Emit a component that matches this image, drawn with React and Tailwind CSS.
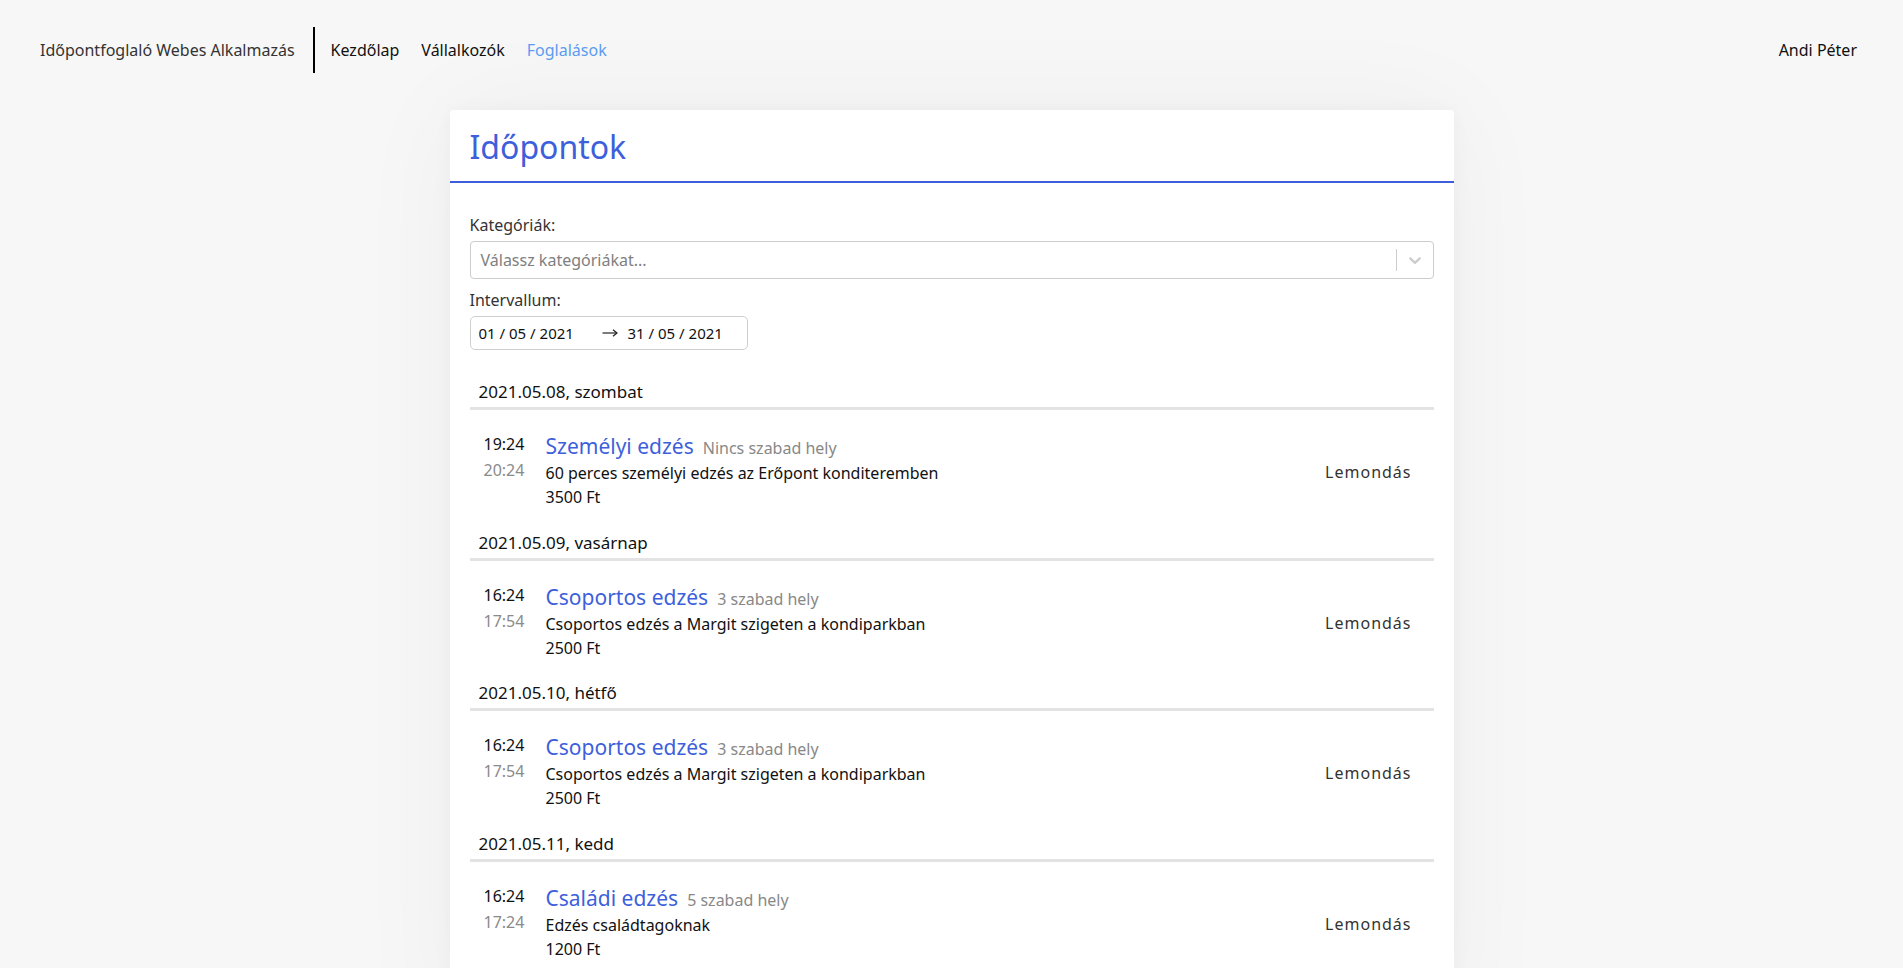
import React from "react";

const days = [
  {
    date: "2021.05.08, szombat",
    start: "19:24",
    end: "20:24",
    title: "Személyi edzés",
    free: "Nincs szabad hely",
    desc: "60 perces személyi edzés az Erőpont konditeremben",
    price: "3500 Ft",
  },
  {
    date: "2021.05.09, vasárnap",
    start: "16:24",
    end: "17:54",
    title: "Csoportos edzés",
    free: "3 szabad hely",
    desc: "Csoportos edzés a Margit szigeten a kondiparkban",
    price: "2500 Ft",
  },
  {
    date: "2021.05.10, hétfő",
    start: "16:24",
    end: "17:54",
    title: "Csoportos edzés",
    free: "3 szabad hely",
    desc: "Csoportos edzés a Margit szigeten a kondiparkban",
    price: "2500 Ft",
  },
  {
    date: "2021.05.11, kedd",
    start: "16:24",
    end: "17:24",
    title: "Családi edzés",
    free: "5 szabad hely",
    desc: "Edzés családtagoknak",
    price: "1200 Ft",
  },
];

function Chevron() {
  return (
    <svg viewBox="0 0 20 20" width="20" height="20" fill="#cccccc">
      <path d="M4.516 7.548c0.436-0.446 1.043-0.481 1.576 0l3.908 3.747 3.908-3.747c0.533-0.481 1.141-0.446 1.574 0 0.436 0.445 0.408 1.197 0 1.615-0.406 0.418-4.695 4.502-4.695 4.502-0.217 0.223-0.502 0.335-0.787 0.335s-0.57-0.112-0.789-0.335c0 0-4.287-4.084-4.695-4.502s-0.436-1.17 0-1.615z" />
    </svg>
  );
}

function Arrow() {
  return (
    <svg viewBox="0 0 16 10" width="16" height="10" fill="none" stroke="#222" strokeWidth="1.2">
      <path d="M0.5 5H15" />
      <path d="M11 1.8L15 5L11 8.2" />
    </svg>
  );
}

export default function App() {
  return (
    <div className="h-screen overflow-hidden bg-[#f7f7f7] font-['Noto_Sans',sans-serif] text-[#111]">
      <nav className="h-[100px] flex items-center pl-10 pr-[46px] text-[16px]">
        <span className="text-[#333] mr-[18px]">Időpontfoglaló Webes Alkalmazás</span>
        <span className="w-[2px] h-[46px] bg-black" />
        <div className="flex items-center gap-[22px] ml-[16px]">
          <span className="text-[#111]">Kezdőlap</span>
          <span className="text-[#111]">Vállalkozók</span>
          <span className="text-[#5b9cf0]">Foglalások</span>
        </div>
        <span className="ml-auto text-[#111]">Andi Péter</span>
      </nav>

      <div className="mt-[10px] mx-auto w-[1004px] bg-white rounded-[4px] shadow-[0_0_18px_rgba(0,0,0,0.035),0_0_110px_rgba(0,0,0,0.045)]">
        <div className="h-[73px] box-border px-5 pt-[18px] border-b-2 border-[#3e5fdb]">
          <h1 className="text-[32px] leading-[38px] text-[#3e5fdb]">Időpontok</h1>
        </div>

        <div className="px-5 pt-[30px] pb-10">
          <div className="text-[16px] leading-6 text-[#333] mb-[4px]">Kategóriák:</div>
          <div className="h-[38px] box-border border border-[#cccccc] rounded-[4px] flex items-center">
            <span className="flex-1 pl-[10px] text-[16px] text-[#808080]">Válassz kategóriákat...</span>
            <span className="w-px h-[22px] bg-[#cccccc]" />
            <span className="w-[36px] flex items-center justify-center">
              <Chevron />
            </span>
          </div>

          <div className="text-[16px] leading-6 text-[#333] mt-[9px] mb-[4px]">Intervallum:</div>
          <div className="w-[278px] h-[34px] box-border border border-[#cfcfcf] rounded-[5px] flex items-center pl-[8px] text-[15px] text-[#111]">
            <span className="w-[123px]">01 / 05 / 2021</span>
            <span className="w-[16px] flex items-center">
              <Arrow />
            </span>
            <span className="ml-[10px]">31 / 05 / 2021</span>
          </div>

          <div className="mt-[30px]">
            {days.map((d, i) => (
              <div key={i}>
                <div className="px-[9px] pb-[3px] border-b-[3px] border-[#e3e3e3] text-[17px] leading-6 text-[#111]">
                  {d.date}
                </div>
                <div className="flex items-center pl-[14px] pr-[22px] pt-[21px] pb-[21.5px]">
                  <div className="w-[62px] shrink-0 self-start text-[16px] leading-[26px]">
                    <div className="text-[#111]">{d.start}</div>
                    <div className="text-[#8a8a8a]">{d.end}</div>
                  </div>
                  <div className="flex-1">
                    <div className="h-[30px] leading-[30px] flex items-baseline">
                      <span className="text-[21px] text-[#3e5fdb]">{d.title}</span>
                      <span className="ml-[9px] text-[16px] text-[#888]">{d.free}</span>
                    </div>
                    <div className="text-[16px] leading-6 text-[#111]">{d.desc}</div>
                    <div className="text-[16px] leading-6 text-[#111]">{d.price}</div>
                  </div>
                  <span className="pt-[4px] text-[16px] tracking-[1px] text-[#333]">Lemondás</span>
                </div>
              </div>
            ))}
          </div>
        </div>
      </div>
    </div>
  );
}
